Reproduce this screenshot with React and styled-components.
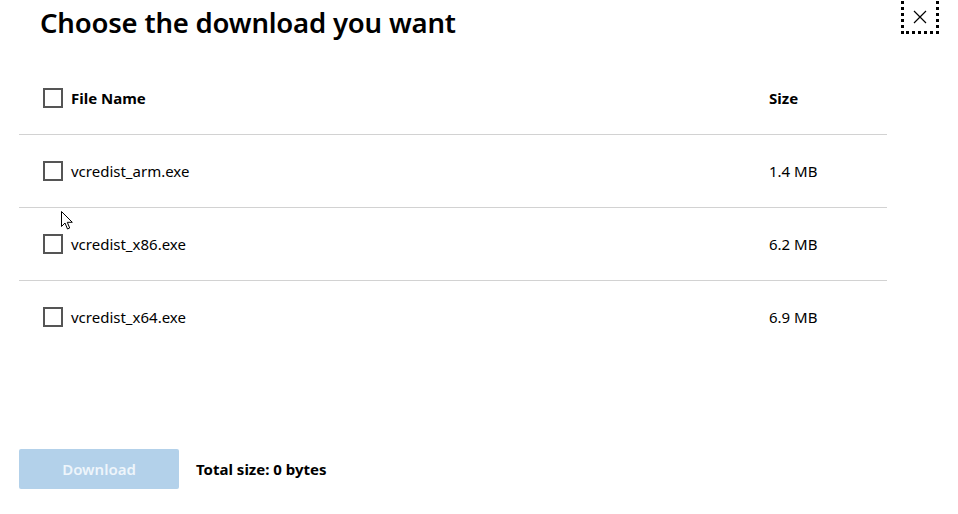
import React from "react";
import styled, { createGlobalStyle } from "styled-components";

const Global = createGlobalStyle`
  html, body { margin: 0; padding: 0; background: #fff; }
  body { font-family: "Noto Sans", "Open Sans", sans-serif; color: #000; }
`;

const Page = styled.div`
  position: relative;
  width: 958px;
  height: 514px;
  padding: 0 19px;
  box-sizing: border-box;
  overflow: hidden;
`;

const Title = styled.h1`
  margin: 0;
  padding: 4px 0 0 21px;
  height: 61px;
  box-sizing: border-box;
  font-size: 27.5px;
  font-weight: 600;
  line-height: 38px;
  letter-spacing: -0.2px;
`;

const CloseButton = styled.button`
  position: absolute;
  top: -6px;
  left: 901px;
  width: 38px;
  height: 40px;
  border: 3px dotted #000;
  background: transparent;
  padding: 0;
  display: flex;
  align-items: center;
  justify-content: center;
  box-sizing: border-box;
  padding-top: 6px;
`;

const Table = styled.div`
  width: 868px;
`;

const Row = styled.div`
  display: grid;
  grid-template-columns: 52px 1fr 118px;
  align-items: center;
  height: 73px;
  padding-left: 24px;
  box-sizing: border-box;
  border-top: ${(p) => (p.$divider ? "1px solid #d2d2d2" : "none")};
  font-size: 15px;
  font-weight: ${(p) => (p.$head ? 700 : 400)};
`;

const Box = styled.span`
  display: block;
  width: 20px;
  height: 20px;
  border: 2px solid #555;
  box-sizing: border-box;
  margin-left: -24px;
  transform: translateX(24px);
`;

const CheckCell = styled.div`
  display: flex;
  align-items: center;
`;

const Name = styled.div`
  margin-left: -24px;
`;

const Footer = styled.div`
  display: flex;
  align-items: center;
  gap: 17px;
  margin-top: 96px;
`;

const DownloadButton = styled.button`
  width: 160px;
  height: 40px;
  border: none;
  border-radius: 2px;
  background: #b3d1ea;
  color: #eef5fb;
  font-family: inherit;
  font-size: 15px;
  font-weight: 600;
`;

const Total = styled.div`
  font-size: 15px;
  font-weight: 700;
`;

const Cursor = styled.svg`
  position: absolute;
  left: 61px;
  top: 211px;
`;

const files = [
  { name: "vcredist_arm.exe", size: "1.4 MB" },
  { name: "vcredist_x86.exe", size: "6.2 MB" },
  { name: "vcredist_x64.exe", size: "6.9 MB" },
];

export default function App() {
  return (
    <Page>
      <Global />
      <CloseButton aria-label="Close">
        <svg width="14" height="14" viewBox="0 0 14 14">
          <path d="M1 1 L13 13 M13 1 L1 13" stroke="#000" strokeWidth="1.2" fill="none" />
        </svg>
      </CloseButton>
      <Title>Choose the download you want</Title>
      <Table>
        <Row $head>
          <CheckCell><Box /></CheckCell>
          <Name>File Name</Name>
          <div>Size</div>
        </Row>
        {files.map((f) => (
          <Row key={f.name} $divider>
            <CheckCell><Box /></CheckCell>
            <Name>{f.name}</Name>
            <div>{f.size}</div>
          </Row>
        ))}
      </Table>
      <Footer>
        <DownloadButton>Download</DownloadButton>
        <Total>Total size: 0 bytes</Total>
      </Footer>
      <Cursor width="13" height="20" viewBox="0 0 13 20">
        <path d="M0.5 0.5 L0.5 15.5 L4 12 L6.5 18 L8.7 17 L6.3 11.3 L11.3 11.3 Z" fill="#fff" stroke="#000" strokeWidth="1" />
      </Cursor>
    </Page>
  );
}
